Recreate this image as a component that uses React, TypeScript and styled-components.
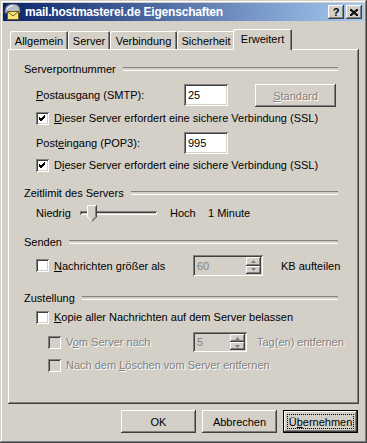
import React from "react";
import styled, { createGlobalStyle, css } from "styled-components";

const FACE = "#d4d0c8";

const GlobalStyle = createGlobalStyle`
  html, body { margin: 0; padding: 0; background: ${FACE}; }
  body { font-family: "Liberation Sans", Arial, sans-serif; font-size: 11px; color: #000; }
  * { box-sizing: border-box; }
`;

const raised = css`
  box-shadow: inset -1px -1px #404040, inset 1px 1px #fff, inset -2px -2px #808080, inset 2px 2px ${FACE};
`;
const sunken = css`
  box-shadow: inset 1px 1px #808080, inset -1px -1px #fff, inset 2px 2px #404040, inset -2px -2px ${FACE};
`;

const Window = styled.div`
  width: 367px;
  height: 443px;
  background: ${FACE};
  padding: 3px;
  display: flex;
  flex-direction: column;
  box-shadow: inset -1px -1px #404040, inset 1px 1px ${FACE}, inset -2px -2px #808080, inset 2px 2px #fff;
`;

const TitleBar = styled.div`
  height: 18px;
  display: flex;
  align-items: center;
  padding: 0 2px 0 1px;
  background: linear-gradient(to right, #0a246a, #a6caf0);
`;

const TitleText = styled.div`
  flex: 1;
  margin-left: 3px;
  color: #fff;
  font-weight: bold;
  font-size: 12px;
  letter-spacing: -0.2px;
  white-space: nowrap;
`;

const TitleButtons = styled.div`
  display: flex;
  gap: 2px;
`;

const TitleButton = styled.div`
  width: 16px;
  height: 14px;
  background: ${FACE};
  ${raised};
  display: flex;
  align-items: center;
  justify-content: center;
  font-weight: bold;
  font-size: 11px;
  line-height: 1;
`;

const Body = styled.div`
  flex: 1;
  display: flex;
  flex-direction: column;
  padding: 8px 5px 0 5px;
`;

const TabStrip = styled.div`
  height: 20px;
  display: flex;
  align-items: flex-end;
  padding-left: 2px;
`;

const Tab = styled.div<{ $w: number; $active?: boolean }>`
  width: ${(p) => p.$w}px;
  height: 18px;
  display: flex;
  align-items: center;
  justify-content: center;
  background: ${FACE};
  border-radius: 2px 2px 0 0;
  box-shadow: inset 1px 1px #fff, inset -1px 0 #404040, inset -2px 0 #808080;
  white-space: nowrap;
  padding-top: 1px;
  ${(p) =>
    p.$active &&
    css`
      height: 21px;
      margin: 0 -2px -1px;
      width: ${p.$w + 4}px;
      position: relative;
      z-index: 2;
      padding-bottom: 3px;
    `}
`;

const Panel = styled.div`
  height: 355px;
  display: flex;
  flex-direction: column;
  padding: 13px 21px 0 16px;
  ${raised};
`;

const Heading = styled.div<{ $top: number }>`
  display: flex;
  align-items: center;
  height: 14px;
  margin-top: ${(p) => p.$top}px;
  white-space: nowrap;
  &::after {
    content: "";
    flex: 1;
    height: 2px;
    margin-left: 7px;
    border-top: 1px solid #808080;
    border-bottom: 1px solid #fff;
  }
`;

const Row = styled.div<{ $top: number; $h: number; $indent?: number; $start?: boolean }>`
  display: flex;
  align-items: ${(p) => (p.$start ? "flex-start" : "center")};
  height: ${(p) => p.$h}px;
  margin-top: ${(p) => p.$top}px;
  padding-left: ${(p) => p.$indent ?? 12}px;
  white-space: nowrap;
`;

const Text = styled.span<{ $w?: number; $ml?: number; $disabled?: boolean }>`
  display: inline-flex;
  align-items: center;
  flex: none;
  ${(p) => p.$w !== undefined && css`width: ${p.$w}px;`}
  margin-left: ${(p) => p.$ml ?? 0}px;
  ${(p) =>
    p.$disabled &&
    css`
      color: #808080;
      text-shadow: 1px 1px 0 #fff;
    `}
`;

const LabelCell = styled.span<{ $w: number }>`
  display: inline-flex;
  align-items: center;
  height: 22px;
  width: ${(p) => p.$w}px;
  flex: none;
`;

const U = styled.span`
  text-decoration: underline;
  text-underline-offset: 1px;
`;

const Field = styled.div<{ $w: number; $h: number; $disabled?: boolean }>`
  width: ${(p) => p.$w}px;
  height: ${(p) => p.$h}px;
  flex: none;
  display: flex;
  align-items: center;
  padding: 2px 2px 2px 4px;
  background: ${(p) => (p.$disabled ? FACE : "#fff")};
  color: ${(p) => (p.$disabled ? "#808080" : "#000")};
  ${sunken};
`;

const FieldValue = styled.span`
  flex: 1;
`;

const SpinButtons = styled.div`
  width: 15px;
  height: 100%;
  display: flex;
  flex-direction: column;
`;

const SpinButton = styled.div`
  flex: 1;
  background: ${FACE};
  ${raised};
  display: flex;
  align-items: center;
  justify-content: center;
`;

const PushButton = styled.div<{ $w: number; $disabled?: boolean; $default?: boolean; $ml?: number }>`
  position: relative;
  width: ${(p) => p.$w}px;
  height: 23px;
  flex: none;
  display: flex;
  align-items: center;
  justify-content: center;
  background: ${FACE};
  margin-left: ${(p) => p.$ml ?? 0}px;
  ${raised};
  ${(p) =>
    p.$disabled &&
    css`
      color: #808080;
      text-shadow: 1px 1px 0 #fff;
    `}
  ${(p) =>
    p.$default &&
    css`
      box-shadow: inset 0 0 0 1px #000, inset -2px -2px #404040, inset 2px 2px #fff, inset -3px -3px #808080;
      &::after {
        content: "";
        position: absolute;
        inset: 4px;
        border: 1px dotted #000;
      }
    `}
`;

const ButtonRow = styled.div`
  display: flex;
  justify-content: flex-end;
  gap: 6px;
  margin-top: 6px;
  padding-right: 1px;
`;

const Box = styled.span<{ $disabled?: boolean }>`
  width: 13px;
  height: 13px;
  flex: none;
  display: inline-flex;
  background: ${(p) => (p.$disabled ? FACE : "#fff")};
  ${sunken};
`;

const SliderWrap = styled.div`
  position: relative;
  width: 77px;
  height: 18px;
  flex: none;
  display: flex;
  align-items: center;
`;

const Groove = styled.div`
  width: 100%;
  height: 4px;
  ${sunken};
  background: ${FACE};
`;

const Thumb = styled.svg`
  position: absolute;
  left: 7px;
  top: 1px;
`;

const CheckBox: React.FC<{ checked?: boolean; disabled?: boolean }> = ({ checked, disabled }) => (
  <Box $disabled={disabled}>
    {checked && (
      <svg width="13" height="13" viewBox="0 0 13 13">
        <path d="M3 5 L5 7 L9 3 M3 6 L5 8 L9 4 M3 7 L5 9 L9 5" stroke="#000" strokeWidth="1" fill="none" shapeRendering="crispEdges" />
      </svg>
    )}
  </Box>
);

const Spinner: React.FC<{ value: string; w: number; h: number }> = ({ value, w, h }) => (
  <Field $w={w} $h={h} $disabled>
    <FieldValue>{value}</FieldValue>
    <SpinButtons>
      <SpinButton>
        <svg width="5" height="3" viewBox="0 0 5 3">
          <path d="M2.5 0 L5 3 L0 3 Z" fill="#808080" />
        </svg>
      </SpinButton>
      <SpinButton>
        <svg width="5" height="3" viewBox="0 0 5 3">
          <path d="M0 0 L5 0 L2.5 3 Z" fill="#808080" />
        </svg>
      </SpinButton>
    </SpinButtons>
  </Field>
);

const AppIcon = () => (
  <svg width="18" height="16" viewBox="0 0 18 16">
    <path d="M1 7 C1 2 5 0 9 0 C13 0 16 2 16 7 L16 9 L1 9 Z" fill="#b8bcc4" stroke="#5a6070" strokeWidth="1" />
    <path d="M3 5 C4 3 7 2 9 2" stroke="#fff" strokeWidth="1" fill="none" />
    <rect x="3.5" y="7.5" width="11" height="8" fill="#f8e878" stroke="#6a5a20" />
    <path d="M3.5 7.5 L9 12 L14.5 7.5" stroke="#6a5a20" fill="none" />
  </svg>
);

export default function App() {
  return (
    <>
      <GlobalStyle />
      <Window>
        <TitleBar>
          <AppIcon />
          <TitleText>mail.hostmasterei.de Eigenschaften</TitleText>
          <TitleButtons>
            <TitleButton>?</TitleButton>
            <TitleButton>
              <svg width="8" height="7" viewBox="0 0 8 7">
                <path d="M0 0 L8 7 M1 0 L8 6 M0 1 L7 7 M8 0 L0 7 M7 0 L0 6 M8 1 L1 7" stroke="#000" strokeWidth="1" />
              </svg>
            </TitleButton>
          </TitleButtons>
        </TitleBar>
        <Body>
          <TabStrip>
            <Tab $w={58}>Allgemein</Tab>
            <Tab $w={42}>Server</Tab>
            <Tab $w={67}>Verbindung</Tab>
            <Tab $w={58}>Sicherheit</Tab>
            <Tab $w={55} $active>
              Erweitert
            </Tab>
          </TabStrip>
          <Panel>
            <Heading $top={0}>Serverportnummer</Heading>
            <Row $top={8} $h={22} $start>
              <LabelCell $w={148}>
                <span>
                  <U>P</U>ostausgang (SMTP):
                </span>
              </LabelCell>
              <Field $w={44} $h={22}>
                <FieldValue>25</FieldValue>
              </Field>
              <PushButton $w={81} $ml={27} $disabled>
                <span>
                  <U>S</U>tandard
                </span>
              </PushButton>
            </Row>
            <Row $top={5} $h={14}>
              <CheckBox checked />
              <Text $ml={5}>
                <span>
                  <U>D</U>ieser Server erfordert eine sichere Verbindung (SSL)
                </span>
              </Text>
            </Row>
            <Row $top={7} $h={22} $start>
              <LabelCell $w={148}>
                <span>
                  Post<U>e</U>ingang (POP3):
                </span>
              </LabelCell>
              <Field $w={44} $h={22}>
                <FieldValue>995</FieldValue>
              </Field>
            </Row>
            <Row $top={4} $h={14}>
              <CheckBox checked />
              <Text $ml={5}>
                <span>
                  D<U>i</U>eser Server erfordert eine sichere Verbindung (SSL)
                </span>
              </Text>
            </Row>

            <Heading $top={14}>Zeitlimit des Servers</Heading>
            <Row $top={4} $h={18}>
              <Text $w={44}>Niedrig</Text>
              <SliderWrap>
                <Groove />
                <Thumb width="10" height="17" viewBox="0 0 10 17">
                  <path d="M0.5 0.5 H9.5 V12 L5 16.5 L0.5 12 Z" fill={FACE} />
                  <path d="M0.5 12 V0.5 H9" stroke="#fff" fill="none" />
                  <path d="M9.5 0.5 V12 L5 16.5" stroke="#404040" fill="none" />
                  <path d="M8.5 1.5 V11.6 L5 15.2" stroke="#808080" fill="none" />
                  <path d="M0.5 12 L4.5 16" stroke="#fff" fill="none" />
                </Thumb>
              </SliderWrap>
              <Text $ml={13} $w={38}>
                Hoch
              </Text>
              <Text>1 Minute</Text>
            </Row>

            <Heading $top={13}>Senden</Heading>
            <Row $top={6} $h={21}>
              <Text $w={157}>
                <CheckBox />
                <Text $ml={5}>
                  <span>
                    <U>N</U>achrichten größer als
                  </span>
                </Text>
              </Text>
              <Spinner value="60" w={70} h={21} />
              <Text $ml={18}>KB aufteilen</Text>
            </Row>

            <Heading $top={15}>Zustellung</Heading>
            <Row $top={5} $h={14}>
              <CheckBox />
              <Text $ml={5}>
                <span>
                  <U>K</U>opie aller Nachrichten auf dem Server belassen
                </span>
              </Text>
            </Row>
            <Row $top={8} $h={20} $indent={24}>
              <Text $w={145}>
                <CheckBox disabled />
                <Text $ml={5} $disabled>
                  <span>
                    V<U>o</U>m Server nach
                  </span>
                </Text>
              </Text>
              <Spinner value="5" w={54} h={20} />
              <Text $ml={10} $disabled>
                Tag(en) entfernen
              </Text>
            </Row>
            <Row $top={6} $h={14} $indent={24}>
              <CheckBox disabled />
              <Text $ml={5} $disabled>
                <span>
                  Nach dem <U>L</U>öschen vom Server entfernen
                </span>
              </Text>
            </Row>
          </Panel>
          <ButtonRow>
            <PushButton $w={75}>OK</PushButton>
            <PushButton $w={75}>Abbrechen</PushButton>
            <PushButton $w={75} $default>
              <span>
                Ü<U>b</U>ernehmen
              </span>
            </PushButton>
          </ButtonRow>
        </Body>
      </Window>
    </>
  );
}
